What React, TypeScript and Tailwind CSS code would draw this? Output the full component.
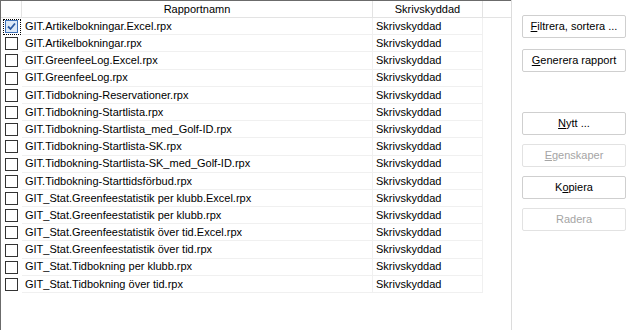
import React from "react";

const rows = [
  "GIT.Artikelbokningar.Excel.rpx",
  "GIT.Artikelbokningar.rpx",
  "GIT.GreenfeeLog.Excel.rpx",
  "GIT.GreenfeeLog.rpx",
  "GIT.Tidbokning-Reservationer.rpx",
  "GIT.Tidbokning-Startlista.rpx",
  "GIT.Tidbokning-Startlista_med_Golf-ID.rpx",
  "GIT.Tidbokning-Startlista-SK.rpx",
  "GIT.Tidbokning-Startlista-SK_med_Golf-ID.rpx",
  "GIT.Tidbokning-Starttidsförbud.rpx",
  "GIT_Stat.Greenfeestatistik per klubb.Excel.rpx",
  "GIT_Stat.Greenfeestatistik per klubb.rpx",
  "GIT_Stat.Greenfeestatistik över tid.Excel.rpx",
  "GIT_Stat.Greenfeestatistik över tid.rpx",
  "GIT_Stat.Tidbokning per klubb.rpx",
  "GIT_Stat.Tidbokning över tid.rpx",
];

const Check = ({ checked }: { checked?: boolean }) =>
  checked ? (
    <div className="w-[13px] h-[13px] border border-[#3d6fb5] bg-[#dce9f8] flex items-center justify-center">
      <svg width="9" height="9" viewBox="0 0 9 9">
        <path d="M1 4.5 L3.5 7 L8 1.5" stroke="#2a5aa3" strokeWidth="1.8" fill="none" />
      </svg>
    </div>
  ) : (
    <div className="w-[13px] h-[13px] border border-[#333333] bg-white" />
  );

const Btn = ({
  children,
  disabled,
  className = "",
}: {
  children: React.ReactNode;
  disabled?: boolean;
  className?: string;
}) => (
  <div
    className={
      "w-[104px] h-[23px] rounded-[2px] border bg-white flex items-center justify-center " +
      (disabled ? "border-[#e2e2e2] text-[#a5a5a5] " : "border-[#cfcfcf] text-black ") +
      className
    }
  >
    {children}
  </div>
);

export default function App() {
  return (
    <div
      className="w-[635px] h-[330px] bg-white flex text-[11px] text-black overflow-hidden"
      style={{ fontFamily: '"Liberation Sans", Arial, sans-serif' }}
    >
      <div className="w-[511px] h-full border-l border-t border-[#6b6b6b] flex flex-col">
        <div className="flex h-[17px] shrink-0">
          <div className="w-[21px] border-r border-b border-[#e3e3e3]" />
          <div className="w-[351px] border-r border-b border-[#e3e3e3] flex items-center justify-center">
            Rapportnamn
          </div>
          <div className="w-[110px] border-r border-b border-[#e3e3e3] flex items-center justify-center">
            Skrivskyddad
          </div>
          <div className="flex-1 border-b border-[#e3e3e3]" />
        </div>
        {rows.map((r, i) => (
          <div key={r} className="flex h-[17.2px] shrink-0">
            <div className="relative w-[21px] flex items-center justify-center">
              <Check checked={i === 0} />
              {i === 0 && (
                <div className="absolute left-[2px] top-[1px] w-[18px] h-[16px] border border-dotted border-black" />
              )}
            </div>
            <div className="w-[351px] border-r border-b border-[#f0f0f0] flex items-center pl-[3px] whitespace-nowrap">
              {r}
            </div>
            <div className="w-[110px] border-r border-b border-[#f0f0f0] flex items-center pl-[3px]">
              Skrivskyddad
            </div>
          </div>
        ))}
      </div>
      <div className="w-px h-full bg-[#dcdcdc]" />
      <div className="flex flex-col pl-[10px] pt-[15px]">
        <Btn>
          <u className="underline-offset-1">F</u>iltrera, sortera ...
        </Btn>
        <Btn className="mt-[11px]">
          <u className="underline-offset-1">G</u>enerera rapport
        </Btn>
        <Btn className="mt-[40px]">
          <u className="underline-offset-1">N</u>ytt ...
        </Btn>
        <Btn disabled className="mt-[9px]">
          <u className="underline-offset-1">E</u>genskaper
        </Btn>
        <Btn className="mt-[9px]">
          K<u className="underline-offset-1">o</u>piera
        </Btn>
        <Btn disabled className="mt-[9px]">
          Radera
        </Btn>
      </div>
    </div>
  );
}
